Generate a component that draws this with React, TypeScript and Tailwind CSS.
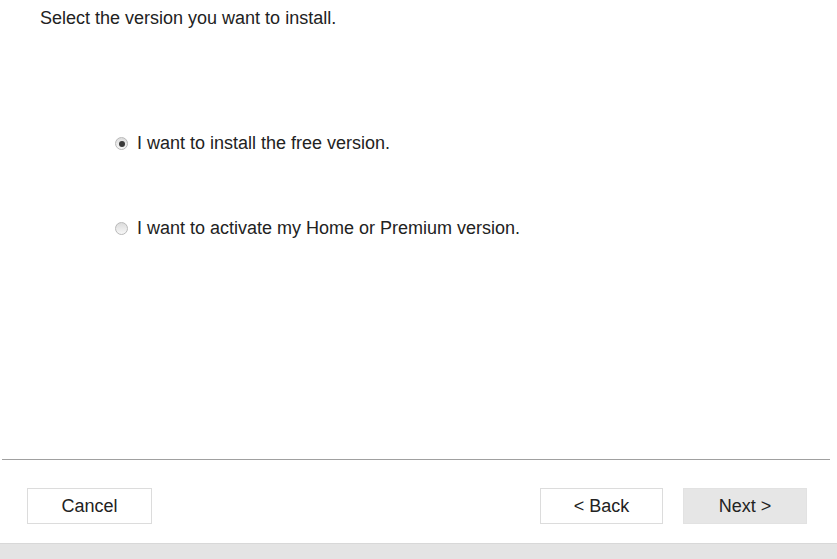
import React, { useState } from 'react';

const Radio: React.FC<{ checked: boolean; onClick: () => void; label: string }> = ({ checked, onClick, label }) => (
  <button type="button" onClick={onClick} className="flex items-center gap-[9px] text-left h-[21px]">
    <span className="w-[13px] h-[13px] rounded-full border border-[#b9b9b9] bg-gradient-to-b from-[#dcdcdc] to-[#f7f7f7] flex items-center justify-center">
      {checked && <span className="w-[6px] h-[6px] rounded-full bg-[#3a3a3a]" />}
    </span>
    <span className="text-[18px] leading-[21px] text-[#222]">{label}</span>
  </button>
);

const App: React.FC = () => {
  const [choice, setChoice] = useState<'free' | 'premium'>('free');

  return (
    <div className="w-[837px] h-[559px] bg-white flex flex-col overflow-hidden" style={{ fontFamily: '"Liberation Sans", Arial, sans-serif' }}>
      <div className="flex-1 flex flex-col">
        <p className="pl-[40px] pt-[8px] text-[18px] leading-[21px] text-[#222]">Select the version you want to install.</p>
        <div className="pl-[115px] pt-[104px] flex flex-col gap-[64px]">
          <Radio checked={choice === 'free'} onClick={() => setChoice('free')} label="I want to install the free version." />
          <Radio checked={choice === 'premium'} onClick={() => setChoice('premium')} label="I want to activate my Home or Premium version." />
        </div>
      </div>

      <div className="ml-[2px] mr-[7px] h-px bg-[#a0a0a0]" />

      <div className="h-[83px] flex items-start pt-[28px] pl-[27px] pr-[30px]">
        <button className="w-[125px] h-[36px] border border-[#dcdcdc] bg-white text-[18px] text-[#222]">Cancel</button>
        <div className="flex-1" />
        <button className="w-[123px] h-[36px] border border-[#dcdcdc] bg-white text-[18px] text-[#222]">&lt; Back</button>
        <button className="ml-[20px] w-[124px] h-[36px] border border-[#e2e2e2] bg-[#e6e6e6] text-[18px] text-[#222]">Next &gt;</button>
      </div>

      <div className="h-[16px] bg-[#e4e4e4] border-t border-[#d8d8d8]" />
    </div>
  );
};

export default App;
